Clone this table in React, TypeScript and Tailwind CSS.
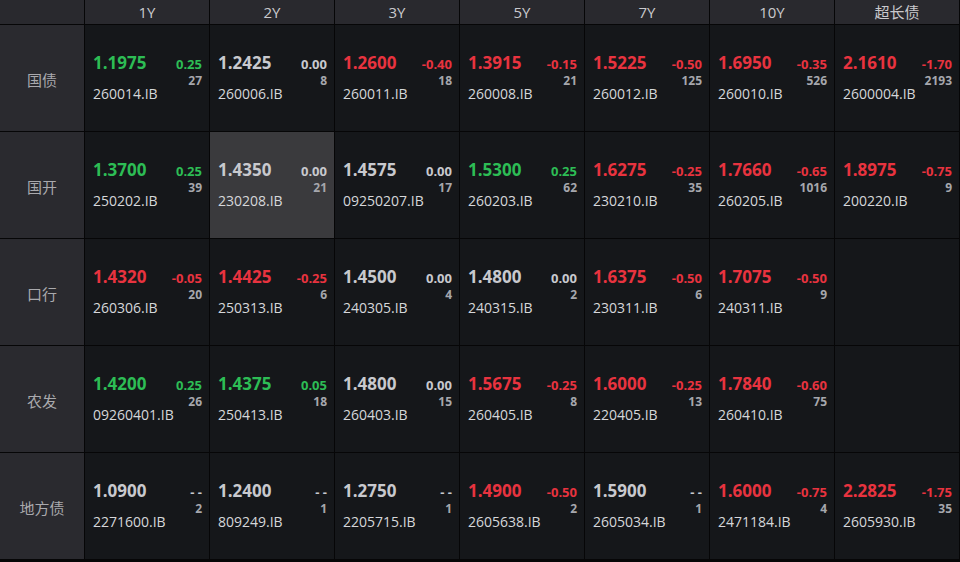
import { Fragment } from 'react';

type Quote = {
  price: string;
  change: string;
  count: string;
  code: string;
  tone: 'up' | 'down' | 'flat';
  active?: boolean;
} | null;

const tenors = ['1Y', '2Y', '3Y', '5Y', '7Y', '10Y', '超长债'];

const rows: { name: string; cells: Quote[] }[] = [
  {
    name: '国债',
    cells: [
      { price: '1.1975', change: '0.25', count: '27', code: '260014.IB', tone: 'up' },
      { price: '1.2425', change: '0.00', count: '8', code: '260006.IB', tone: 'flat' },
      { price: '1.2600', change: '-0.40', count: '18', code: '260011.IB', tone: 'down' },
      { price: '1.3915', change: '-0.15', count: '21', code: '260008.IB', tone: 'down' },
      { price: '1.5225', change: '-0.50', count: '125', code: '260012.IB', tone: 'down' },
      { price: '1.6950', change: '-0.35', count: '526', code: '260010.IB', tone: 'down' },
      { price: '2.1610', change: '-1.70', count: '2193', code: '2600004.IB', tone: 'down' },
    ],
  },
  {
    name: '国开',
    cells: [
      { price: '1.3700', change: '0.25', count: '39', code: '250202.IB', tone: 'up' },
      { price: '1.4350', change: '0.00', count: '21', code: '230208.IB', tone: 'flat', active: true },
      { price: '1.4575', change: '0.00', count: '17', code: '09250207.IB', tone: 'flat' },
      { price: '1.5300', change: '0.25', count: '62', code: '260203.IB', tone: 'up' },
      { price: '1.6275', change: '-0.25', count: '35', code: '230210.IB', tone: 'down' },
      { price: '1.7660', change: '-0.65', count: '1016', code: '260205.IB', tone: 'down' },
      { price: '1.8975', change: '-0.75', count: '9', code: '200220.IB', tone: 'down' },
    ],
  },
  {
    name: '口行',
    cells: [
      { price: '1.4320', change: '-0.05', count: '20', code: '260306.IB', tone: 'down' },
      { price: '1.4425', change: '-0.25', count: '6', code: '250313.IB', tone: 'down' },
      { price: '1.4500', change: '0.00', count: '4', code: '240305.IB', tone: 'flat' },
      { price: '1.4800', change: '0.00', count: '2', code: '240315.IB', tone: 'flat' },
      { price: '1.6375', change: '-0.50', count: '6', code: '230311.IB', tone: 'down' },
      { price: '1.7075', change: '-0.50', count: '9', code: '240311.IB', tone: 'down' },
      null,
    ],
  },
  {
    name: '农发',
    cells: [
      { price: '1.4200', change: '0.25', count: '26', code: '09260401.IB', tone: 'up' },
      { price: '1.4375', change: '0.05', count: '18', code: '250413.IB', tone: 'up' },
      { price: '1.4800', change: '0.00', count: '15', code: '260403.IB', tone: 'flat' },
      { price: '1.5675', change: '-0.25', count: '8', code: '260405.IB', tone: 'down' },
      { price: '1.6000', change: '-0.25', count: '13', code: '220405.IB', tone: 'down' },
      { price: '1.7840', change: '-0.60', count: '75', code: '260410.IB', tone: 'down' },
      null,
    ],
  },
  {
    name: '地方债',
    cells: [
      { price: '1.0900', change: '- -', count: '2', code: '2271600.IB', tone: 'flat' },
      { price: '1.2400', change: '- -', count: '1', code: '809249.IB', tone: 'flat' },
      { price: '1.2750', change: '- -', count: '1', code: '2205715.IB', tone: 'flat' },
      { price: '1.4900', change: '-0.50', count: '2', code: '2605638.IB', tone: 'down' },
      { price: '1.5900', change: '- -', count: '1', code: '2605034.IB', tone: 'flat' },
      { price: '1.6000', change: '-0.75', count: '4', code: '2471184.IB', tone: 'down' },
      { price: '2.2825', change: '-1.75', count: '35', code: '2605930.IB', tone: 'down' },
    ],
  },
];

const toneClass = {
  up: 'text-[#2dbd55]',
  down: 'text-[#e8333f]',
  flat: 'text-[#c8c9ce]',
};

function QuoteCell({ q }: { q: Quote }) {
  if (!q) return <div className="bg-[#15171a]" />;
  return (
    <div className={`${q.active ? 'bg-[#3a3a3d]' : 'bg-[#15171a]'} flex flex-col justify-center pb-[4px] pl-[8px] pr-[7px]`}>
      <div className="flex items-baseline justify-between">
        <span className={`text-[17px] font-bold leading-[22px] ${toneClass[q.tone]}`}>{q.price}</span>
        <span className={`text-[13px] font-bold leading-[22px] ${toneClass[q.tone]}`}>{q.change}</span>
      </div>
      <div className="text-right text-[12px] font-bold leading-[12px] text-[#a6a7ad]">{q.count}</div>
      <div className="text-[14px] leading-[14px] text-[#d6d7da]">{q.code}</div>
    </div>
  );
}

export default function App() {
  return (
    <div
      className="h-[562px] w-[960px] overflow-hidden bg-[#060607]"
      style={{ fontFamily: '"Open Sans", "Noto Sans CJK SC", sans-serif' }}
    >
      <div className="grid grid-cols-[84px_repeat(7,124px)] grid-rows-[24px_repeat(5,106px)] gap-px">
        <div className="bg-[#29292e]" />
        {tenors.map((t) => (
          <div key={t} className="flex items-center justify-center bg-[#29292e] text-[15px] text-[#c9c9cd]">
            {t}
          </div>
        ))}
        {rows.map((r) => (
          <Fragment key={r.name}>
            <div className="flex items-center justify-center bg-[#2a2a2f] pt-[4px] text-[15px] text-[#a9a9ad]">
              {r.name}
            </div>
            {r.cells.map((c, i) => (
              <QuoteCell key={i} q={c} />
            ))}
          </Fragment>
        ))}
      </div>
    </div>
  );
}
